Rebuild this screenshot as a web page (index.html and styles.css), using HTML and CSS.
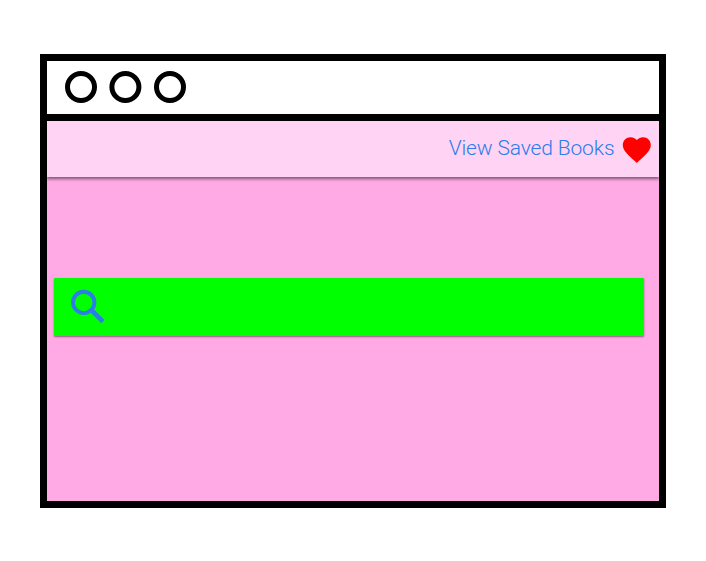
FILE: index.html
```html
<!DOCTYPE html>
<html lang="en">
<head>
<meta charset="utf-8">
<title>Books</title>
<link rel="stylesheet" href="styles.css">
</head>
<body>
<main class="window">
  <div class="titlebar">
    <svg class="controls" viewBox="0 0 124 34" fill="none" stroke="#000" stroke-width="5">
      <circle cx="17" cy="17" r="13.5"/>
      <circle cx="61.4" cy="17" r="13.5"/>
      <circle cx="106" cy="17" r="13.5"/>
    </svg>
  </div>
  <header class="nav">
    <a class="saved">View Saved Books</a>
    <svg class="heart" viewBox="0 0 24 24"><path fill="#f00" d="M12 21.35l-1.45-1.32C5.4 15.36 2 12.28 2 8.5 2 5.42 4.42 3 7.5 3c1.74 0 3.41.81 4.5 2.09C13.09 3.81 14.76 3 16.5 3 19.58 3 22 5.42 22 8.5c0 3.78-3.4 6.86-8.55 11.54L12 21.35z"/></svg>
  </header>
  <section class="content">
    <div class="search">
      <svg class="glass" viewBox="0 0 46 46" fill="none" stroke="#2c7cea">
        <circle cx="18.7" cy="18.4" r="10.7" stroke-width="3.9"/>
        <path d="M26 25.8l2.8 2.8" stroke-width="4"/>
        <path d="M27.6 27.4L38 37.7" stroke-width="4.7"/>
      </svg>
    </div>
  </section>
</main>
</body>
</html>
```
FILE: styles.css
```css
body {
  margin: 0;
  padding: 54px 40px 53px;
  background: #fff;
  font-family: Roboto, sans-serif;
}
.window {
  box-sizing: border-box;
  width: 626px;
  height: 454px;
  border: 7px solid #000;
  background: #ffa9e5;
  display: flex;
  flex-direction: column;
}
.titlebar {
  box-sizing: border-box;
  height: 60px;
  padding: 9px 0 0 17px;
  border-bottom: 7px solid #000;
  background: #fff;
}
.controls {
  display: block;
  width: 124px;
  height: 34px;
}
.nav {
  box-sizing: border-box;
  height: 56px;
  display: flex;
  align-items: flex-start;
  justify-content: flex-end;
  padding: 12px 5px 0 0;
  background: #ffd3f3;
  box-shadow: 0 2px 3px rgba(0, 0, 0, .5);
  clip-path: inset(0 0 -8px 0);
}
.saved {
  margin: 3px 6px 0 0;
  color: #2c7cea;
  font-size: 21px;
  font-weight: 300;
  line-height: 25px;
  letter-spacing: -.14px;
  white-space: nowrap;
}
.heart {
  width: 33.6px;
  height: 33.6px;
}
.content {
  flex: 1;
  padding: 101px 15px 0 7px;
}
.search {
  box-sizing: border-box;
  height: 58px;
  padding: 6px 0 0 11px;
  border-radius: 1px;
  background: #0f0;
  box-shadow: 0 1px 2px rgba(0, 0, 0, .45);
}
.glass {
  display: block;
  width: 46px;
  height: 46px;
}
```
